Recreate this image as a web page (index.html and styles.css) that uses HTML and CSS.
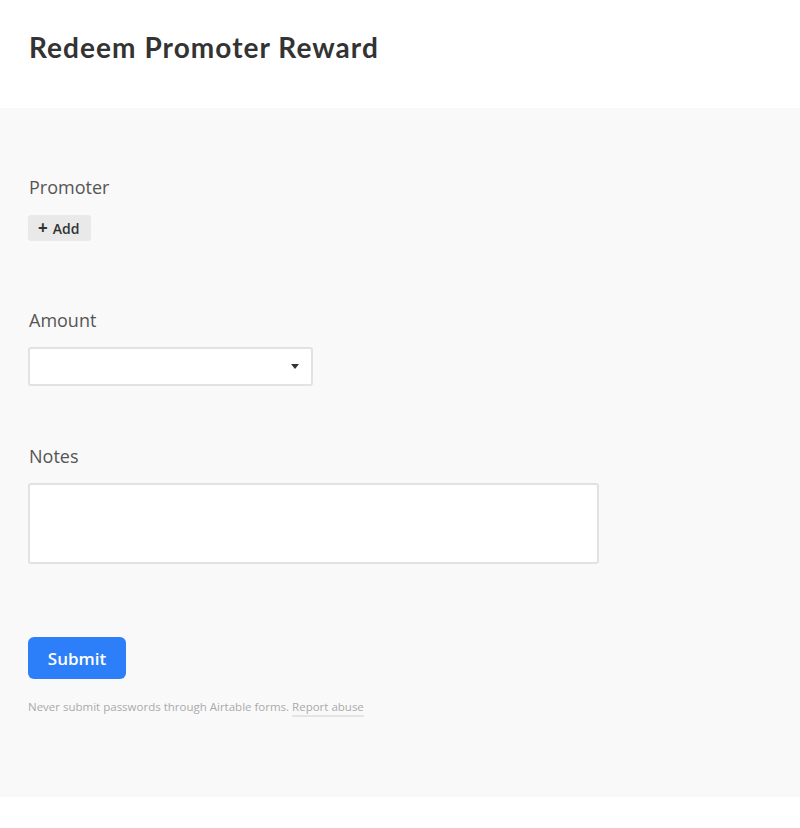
FILE: index.html
```html
<!DOCTYPE html>
<html>
<head>
<meta charset="utf-8">
<link rel="stylesheet" href="styles.css">
</head>
<body>
<header class="header">
  <h1 class="title">Redeem Promoter Reward</h1>
</header>
<main class="form">
  <section class="field field-promoter">
    <div class="label">Promoter</div>
    <button class="add-btn"><span class="plus">+</span>Add</button>
  </section>
  <section class="field field-amount">
    <div class="label">Amount</div>
    <div class="select">
      <svg class="caret" width="8" height="5" viewBox="0 0 8 5"><path d="M0 0H8L4 5Z" fill="#333"/></svg>
    </div>
  </section>
  <section class="field field-notes">
    <div class="label">Notes</div>
    <div class="textarea"></div>
  </section>
  <button class="submit">Submit</button>
  <p class="footnote">Never submit passwords through Airtable forms. <span class="report">Report abuse</span></p>
</main>
</body>
</html>
```
FILE: styles.css
```css
* { box-sizing: border-box; }
html, body { margin: 0; padding: 0; background: #fff; }
body { font-family: "Open Sans", "Noto Sans", sans-serif; color: #333; }
.header { height: 108px; padding: 28px 29px 0; }
.title {
  margin: 0;
  font-family: Lato, "Open Sans", sans-serif;
  font-weight: 700;
  font-size: 28px;
  line-height: 38px;
  color: #333;
  letter-spacing: 1.05px;
}
.form {
  background: #f9f9f9;
  padding: 67px 28px 82px;
  display: flex;
  flex-direction: column;
  align-items: flex-start;
}
.field { display: flex; flex-direction: column; align-items: flex-start; }
.label {
  font-size: 18px;
  line-height: 24px;
  color: #555;
  padding-left: 1px;
}
.field-promoter .label { margin-bottom: 16px; }
.add-btn {
  height: 26px;
  width: 63px;
  border: 0;
  border-radius: 3px;
  background: #e9e9e9;
  font-family: "Open Sans", sans-serif;
  font-weight: 600;
  font-size: 14px;
  color: #333;
  display: flex;
  align-items: center;
  padding: 0 0 0 10px;
  gap: 5px;
}
.plus { font-weight: 700; font-size: 17px; line-height: 1; margin-top: -2px; }
.field-amount { margin-top: 67px; }
.field-amount .label { margin-bottom: 15px; }
.select {
  width: 285px;
  height: 39px;
  background: #fff;
  border: 2px solid #e2e2e2;
  border-radius: 3px;
  display: flex;
  align-items: center;
  justify-content: flex-end;
  padding-right: 12px;
}
.field-notes { margin-top: 58px; }
.field-notes .label { margin-bottom: 15px; }
.textarea {
  width: 571px;
  height: 81px;
  background: #fff;
  border: 2px solid #e2e2e2;
  border-radius: 3px;
}
.submit {
  margin-top: 73px;
  width: 98px;
  height: 42px;
  border: 0;
  border-radius: 6px;
  background: #2d7ff9;
  color: #fff;
  font-family: "Open Sans", sans-serif;
  font-weight: 600;
  font-size: 17px;
}
.footnote {
  margin: 20px 0 0;
  font-size: 11.5px;
  line-height: 16px;
  color: #aaa;
}
.report { border-bottom: 2px solid #e4e4e4; padding-bottom: 1px; }
```
